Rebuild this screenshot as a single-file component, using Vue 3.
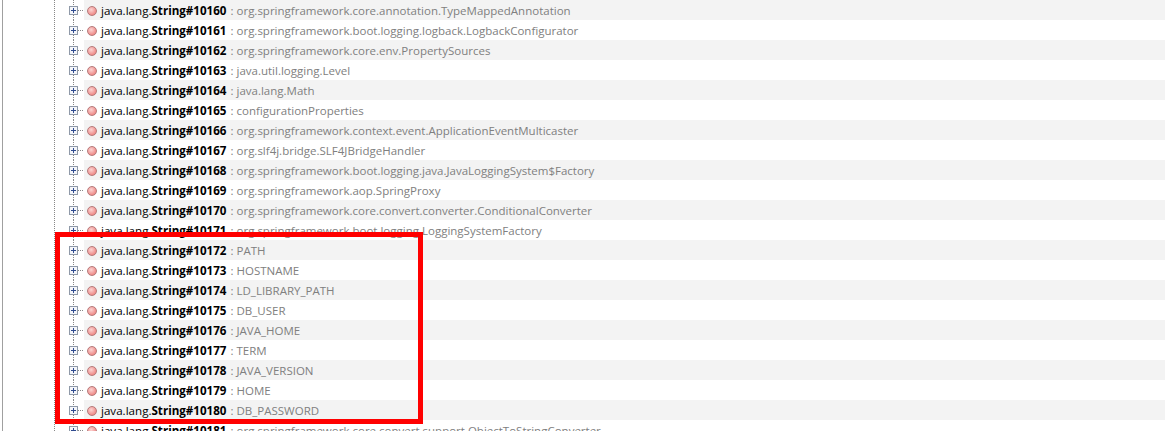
<script setup>
const rows = [
  [10160, 'org.springframework.core.annotation.TypeMappedAnnotation'],
  [10161, 'org.springframework.boot.logging.logback.LogbackConfigurator'],
  [10162, 'org.springframework.core.env.PropertySources'],
  [10163, 'java.util.logging.Level'],
  [10164, 'java.lang.Math'],
  [10165, 'configurationProperties'],
  [10166, 'org.springframework.context.event.ApplicationEventMulticaster'],
  [10167, 'org.slf4j.bridge.SLF4JBridgeHandler'],
  [10168, 'org.springframework.boot.logging.java.JavaLoggingSystem$Factory'],
  [10169, 'org.springframework.aop.SpringProxy'],
  [10170, 'org.springframework.core.convert.converter.ConditionalConverter'],
  [10171, 'org.springframework.boot.logging.LoggingSystemFactory'],
  [10172, 'PATH'],
  [10173, 'HOSTNAME'],
  [10174, 'LD_LIBRARY_PATH'],
  [10175, 'DB_USER'],
  [10176, 'JAVA_HOME'],
  [10177, 'TERM'],
  [10178, 'JAVA_VERSION'],
  [10179, 'HOME'],
  [10180, 'DB_PASSWORD'],
  [10181, 'org.springframework.core.convert.support.ObjectToStringConverter'],
]
</script>

<template>
  <div class="page">
    <div class="tree">
      <div v-for="(r, i) in rows" :key="r[0]" class="row">
        <div class="gutter">
          <svg class="toggle" width="30" height="20" viewBox="0 0 30 20">
            <path d="M0.5 0V20" class="dots" />
            <path d="M19.5 0V6M19.5 15V20" class="dots" />
            <path d="M24 10.5H30" class="dots" />
            <rect x="15.5" y="6.5" width="8" height="8" fill="#f4f6fa" stroke="#8f99a8" />
            <path d="M17 10.5H22M19.5 8V13" stroke="#2f4a8f" stroke-width="1" fill="none" />
          </svg>
        </div>
        <div class="body" :class="{ shaded: i % 2 === 0 }">
          <span class="ball"></span>
          <span class="label">java.lang.<b>String#{{ r[0] }}</b></span>
          <span class="val">: {{ r[1] }}</span>
        </div>
      </div>
    </div>
    <div class="mark"></div>
  </div>
</template>

<style scoped>
.page {
  position: relative;
  width: 1165px;
  height: 431px;
  overflow: hidden;
  background: #fff;
  font-family: "Open Sans", "Noto Sans", sans-serif;
  font-size: 11.6px;
}
.tree {
  margin-left: 2px;
  height: 431px;
  border-left: 1px solid #a0a0a0;
}
.row {
  display: flex;
  height: 20px;
  line-height: 20px;
  white-space: nowrap;
}
.gutter {
  width: 81px;
  display: flex;
  justify-content: flex-end;
  flex: none;
}
.toggle {
  display: block;
}
.dots {
  stroke: #888;
  stroke-dasharray: 1 1;
  fill: none;
}
.body {
  flex: 1;
  display: flex;
  align-items: center;
  padding-left: 3px;
}
.shaded {
  background: #f3f3f3;
}
.ball {
  width: 10px;
  height: 10px;
  border-radius: 50%;
  flex: none;
  margin-right: 4px;
  margin-top: 2px;
  box-sizing: border-box;
  border: 1px solid #b57a7a;
  background: radial-gradient(circle at 40% 35%, #fcd4d3, #ee8886 75%);
}
.label {
  color: #000;
  margin-right: 4px;
  margin-top: 2px;
}
.label b {
  font-weight: 700;
}
.val {
  color: #808080;
  font-size: 11.5px;
  margin-top: 2px;
  white-space: pre;
}
.mark {
  position: absolute;
  left: 55px;
  top: 232px;
  width: 368px;
  height: 192px;
  box-sizing: border-box;
  border: 5px solid #f00;
}
</style>
